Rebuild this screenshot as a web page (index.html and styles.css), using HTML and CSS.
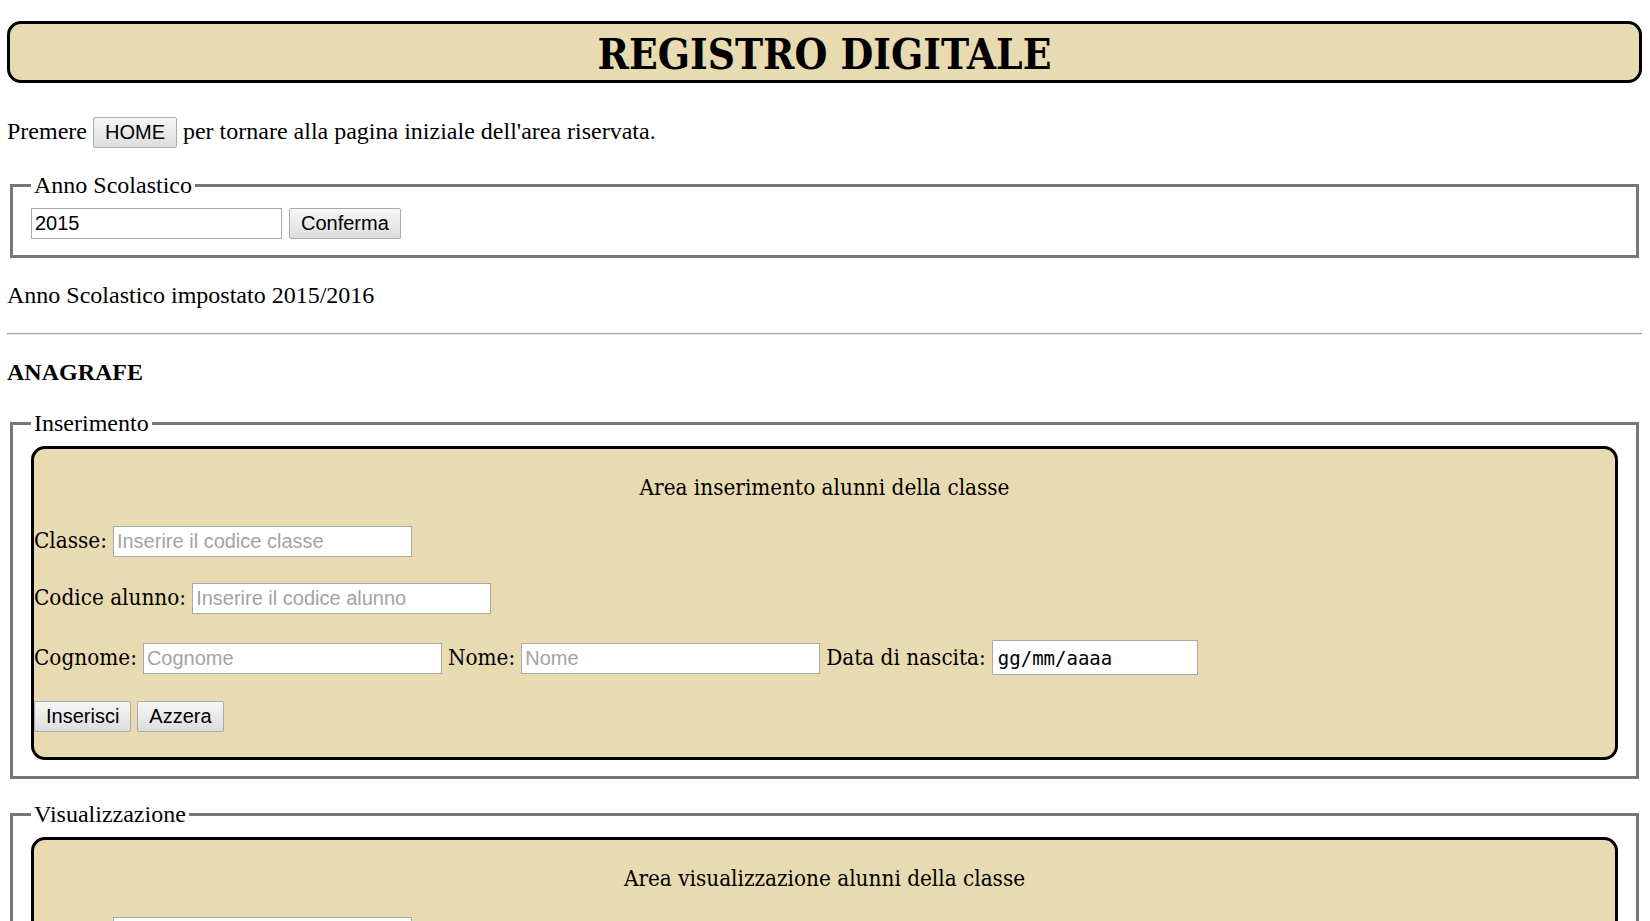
FILE: index.html
```html
<!DOCTYPE html>
<html lang="it">
<head>
<meta charset="utf-8">
<title>Registro Digitale</title>
<link rel="stylesheet" href="styles.css">
</head>
<body>
<div class="titolo">REGISTRO DIGITALE</div>

<p class="testo">Premere <button class="btn" type="button">HOME</button> per tornare alla pagina iniziale dell'area riservata.</p>

<fieldset class="gruppo">
  <legend>Anno Scolastico</legend>
  <div class="riga-anno">
    <input class="campo campo-anno" type="text" value="2015">
    <button class="btn" type="button">Conferma</button>
  </div>
</fieldset>

<p class="testo">Anno Scolastico impostato 2015/2016</p>

<hr class="separatore">

<p class="testo sezione">ANAGRAFE</p>

<fieldset class="gruppo">
  <legend>Inserimento</legend>
  <div class="area">
    <p class="area-titolo">Area inserimento alunni della classe</p>
    <div class="riga">
      <label class="etichetta">Classe:</label>
      <input class="campo campo-largo" type="text" placeholder="Inserire il codice classe">
    </div>
    <div class="riga">
      <label class="etichetta">Codice alunno:</label>
      <input class="campo campo-largo" type="text" placeholder="Inserire il codice alunno">
    </div>
    <div class="riga riga-dati">
      <label class="etichetta">Cognome:</label>
      <input class="campo campo-largo" type="text" placeholder="Cognome">
      <label class="etichetta">Nome:</label>
      <input class="campo campo-largo" type="text" placeholder="Nome">
      <label class="etichetta">Data di nascita:</label>
      <input class="campo campo-data" type="text" value="gg/mm/aaaa">
    </div>
    <div class="riga riga-bottoni">
      <button class="btn" type="button">Inserisci</button>
      <button class="btn" type="button">Azzera</button>
    </div>
  </div>
</fieldset>

<fieldset class="gruppo gruppo-secondo">
  <legend>Visualizzazione</legend>
  <div class="area">
    <p class="area-titolo">Area visualizzazione alunni della classe</p>
    <div class="riga">
      <label class="etichetta">Classe:</label>
      <input class="campo campo-largo" type="text" placeholder="Inserire il codice classe">
    </div>
    <div class="riga riga-bottoni">
      <button class="btn" type="button">Visualizza</button>
    </div>
  </div>
</fieldset>
</body>
</html>
```

FILE: styles.css
```css
html {
  scrollbar-width: none;
}
html::-webkit-scrollbar {
  width: 0;
  height: 0;
}

body {
  margin: 21px 8px 40px 7px;
  font-family: "Liberation Serif", "Times New Roman", serif;
  font-size: 24px;
  color: #000;
  background: #fff;
}

.titolo {
  box-sizing: border-box;
  height: 62px;
  margin-bottom: 34px;
  border: 3px solid #000;
  border-radius: 14px;
  background: #e9dbb1;
  text-align: center;
  font-family: "DejaVu Serif Condensed", "DejaVu Serif", serif;
  font-stretch: condensed;
  font-weight: bold;
  font-size: 42px;
  line-height: 61px;
  overflow: hidden;
}

.testo {
  margin: 24px 0;
}

.sezione {
  font-weight: bold;
}

.separatore {
  height: 0;
  margin: 12px 0;
  border: none;
  border-top: 1px solid #a0a0a0;
  border-bottom: 1px solid #ececec;
}

.gruppo {
  margin: 0 3px;
  padding: 9px 18px 16px;
  border: 3px solid #777;
}

.gruppo legend {
  padding: 0 3px;
}

.gruppo-secondo {
  margin-top: 22px;
}

.riga-anno {
  display: flex;
  align-items: baseline;
  gap: 7px;
}

.area {
  border: 3px solid #000;
  border-radius: 14px;
  background: #e9dbb1;
  font-family: "DejaVu Serif Condensed", "DejaVu Serif", serif;
  font-stretch: condensed;
  font-size: 22.3px;
}

.area-titolo {
  margin: 25px 0 24px;
  text-align: center;
}

.riga {
  display: flex;
  align-items: baseline;
  gap: 6px;
  margin: 26px 0;
}

.riga-dati {
  margin-top: 24px;
}

.riga-bottoni {
  margin-top: 25px;
  margin-bottom: 25px;
}

.etichetta {
  white-space: nowrap;
}

.campo {
  box-sizing: border-box;
  height: 31px;
  margin: 0;
  padding: 0 3px;
  border: 1px solid #a9a9a9;
  background: #fff;
  color: #000;
  font-family: "Liberation Sans", Arial, sans-serif;
  font-size: 20px;
}

.campo::placeholder {
  color: #a3a3a3;
}

.campo-anno {
  width: 251px;
}

.campo-largo {
  width: 299px;
}

.campo-data {
  width: 206px;
  height: 35px;
  padding: 0 5px;
  font-family: "DejaVu Sans Mono", "Liberation Mono", monospace;
  font-size: 19px;
}

.btn {
  box-sizing: border-box;
  height: 31px;
  margin: 0;
  padding: 0 11px;
  border: 1px solid #ababab;
  border-radius: 2px;
  background: linear-gradient(to bottom, #f6f6f6, #dddddd);
  color: #000;
  font-family: "Liberation Sans", Arial, sans-serif;
  font-size: 20px;
}
```
